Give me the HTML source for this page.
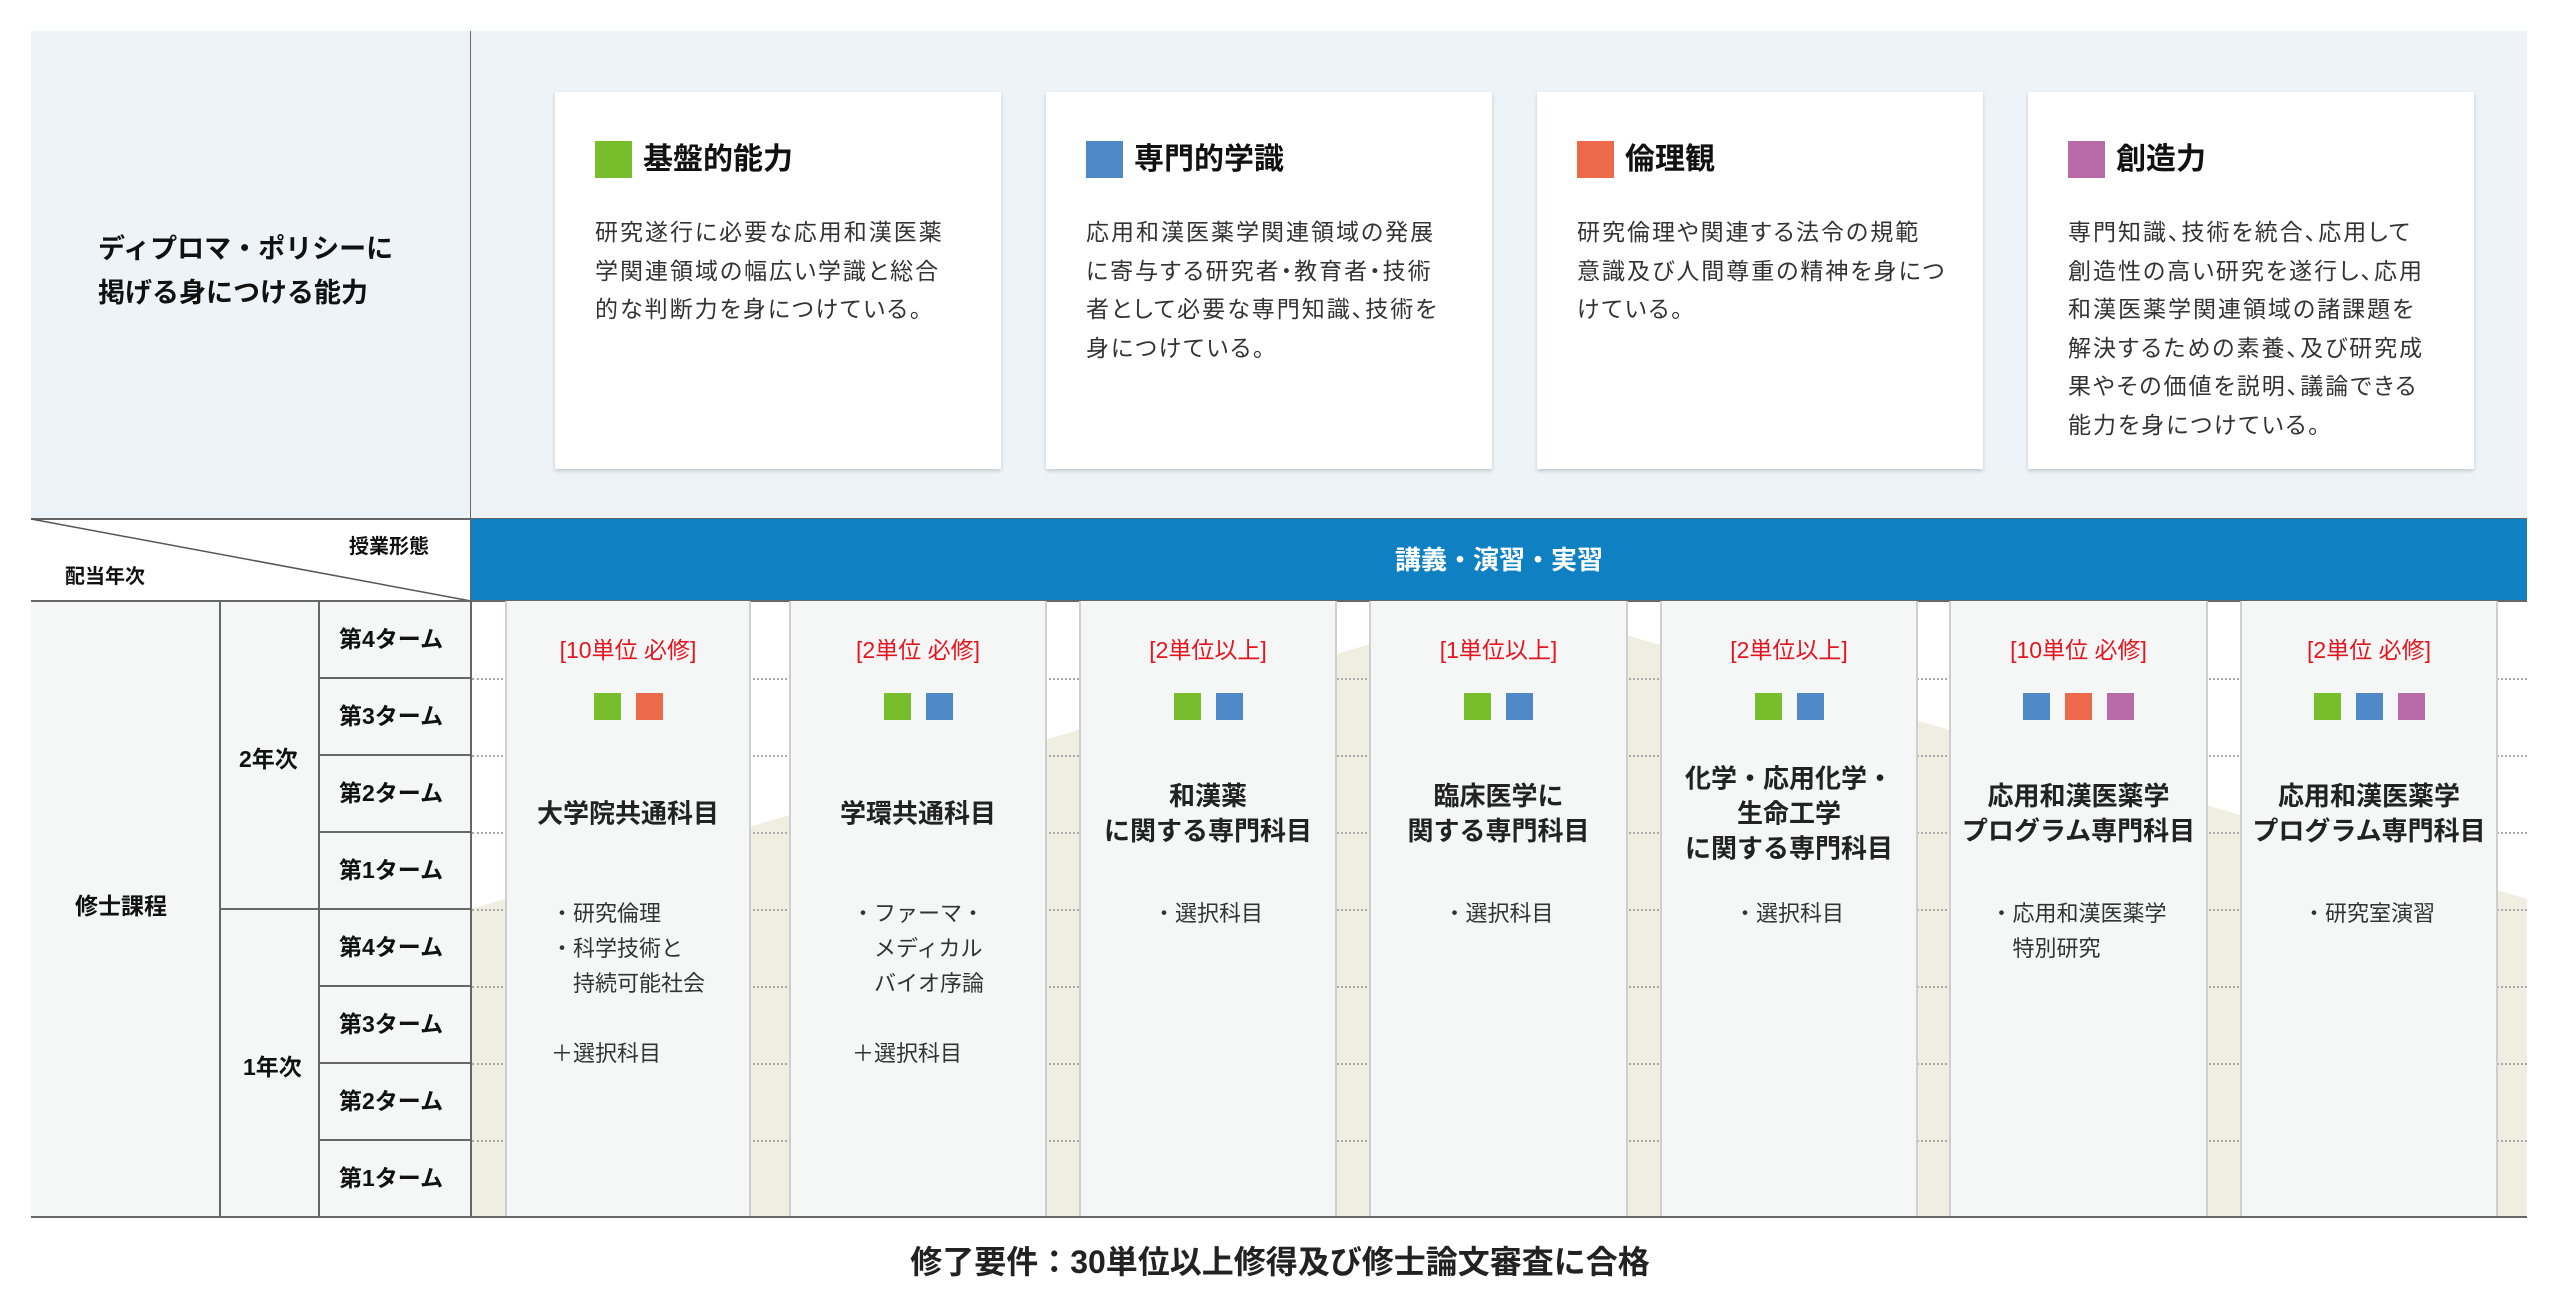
<!DOCTYPE html>
<html lang="ja"><head><meta charset="utf-8">
<style>
*{margin:0;padding:0;box-sizing:border-box}
body{width:2560px;height:1312px;background:#fff;position:relative;overflow:hidden;font-family:"Liberation Sans","Noto Sans CJK JP",sans-serif;color:#222}
.a{position:absolute}
.card{position:absolute;top:92px;width:446px;height:377px;background:#fff;box-shadow:0 2px 4px rgba(0,0,0,.18)}
.card .sq{position:absolute;left:40px;top:49px;width:37px;height:37px}
.card h3{position:absolute;left:88px;top:46px;font-size:30px;font-weight:bold;line-height:44px;color:#111}
.card p{position:absolute;left:40px;top:121px;white-space:nowrap;font-size:23px;line-height:38.5px;letter-spacing:2px;color:#333;font-feature-settings:"palt"}
.g{background:#78bd2b}.b{background:#4e88c7}.o{background:#ec6a4b}.p{background:#b96aa9}
.col{position:absolute;top:601px;height:616px;background:#f5f7f7;border-left:2px solid #cfcfcf;border-right:2px solid #cfcfcf;text-align:center}
.cr{position:absolute;left:0;right:0;top:33px;font-size:23px;line-height:32px;color:#e5151f}
.sqs{position:absolute;left:0;right:0;top:92px;height:27px;display:flex;justify-content:center;gap:15px}
.sqs span{width:27px;height:27px;display:block}
.tt{position:absolute;left:-4px;right:-4px;top:213px;transform:translateY(-50%);font-size:26px;font-weight:bold;line-height:35px;color:#222}
.bl{position:absolute;left:0;right:0;top:295px;text-align:center}
.bl div{display:inline-block;text-align:left;font-size:22px;line-height:35px;color:#333}
.term{position:absolute;left:319px;width:152px;height:77px;border-bottom:2px solid #666;font-size:23px;font-weight:bold;line-height:75px;padding-left:20px;color:#111}
.dot{position:absolute;height:0;border-top:2px dotted #aaa}
</style></head><body>
<div class="a" style="left:31px;top:31px;width:2496px;height:487px;background:#eef3f7"></div>
<div class="a" style="left:470px;top:31px;width:1px;height:570px;background:#666"></div>
<div class="a" style="left:98px;top:227px;font-size:27px;font-weight:bold;line-height:44px;color:#111">ディプロマ・ポリシーに<br>掲げる身につける能力</div>

<div class="card" style="left:555px"><div class="sq g"></div><h3>基盤的能力</h3><p>研究遂行に必要な応用和漢医薬<br>学関連領域の幅広い学識と総合<br>的な判断力を身につけている。</p></div>
<div class="card" style="left:1046px"><div class="sq b"></div><h3>専門的学識</h3><p>応用和漢医薬学関連領域の発展<br>に寄与する研究者・教育者・技術<br>者として必要な専門知識、技術を<br>身につけている。</p></div>
<div class="card" style="left:1537px"><div class="sq o"></div><h3>倫理観</h3><p>研究倫理や関連する法令の規範<br>意識及び人間尊重の精神を身につ<br>けている。</p></div>
<div class="card" style="left:2028px"><div class="sq p"></div><h3>創造力</h3><p>専門知識、技術を統合、応用して<br>創造性の高い研究を遂行し、応用<br>和漢医薬学関連領域の諸課題を<br>解決するための素養、及び研究成<br>果やその価値を説明、議論できる<br>能力を身につけている。</p></div>

<div class="a" style="left:31px;top:518px;width:2496px;height:2px;background:#666"></div>
<svg class="a" style="left:31px;top:518px" width="440" height="84"><line x1="0" y1="1" x2="440" y2="83" stroke="#555" stroke-width="1.5"/></svg>
<div class="a" style="left:349px;top:530px;font-size:20px;font-weight:bold;color:#111">授業形態</div>
<div class="a" style="left:65px;top:560px;font-size:20px;font-weight:bold;color:#111">配当年次</div>
<div class="a" style="left:471px;top:519px;width:2056px;height:82px;background:#0f80c1;color:#fff;font-size:26px;font-weight:bold;line-height:82px;text-align:center">講義・演習・実習</div>
<div class="a" style="left:31px;top:600px;width:2496px;height:2px;background:#666"></div>

<svg class="a" style="left:0;top:0" width="2560" height="1312"><polygon points="471,909 1513,602 2527,899 2527,1217 471,1217" fill="#efeee1"/></svg>

<div class="a" style="left:31px;top:602px;width:440px;height:615px;background:#f5f7f6"></div>
<div class="a" style="left:219px;top:602px;width:2px;height:615px;background:#666"></div>
<div class="a" style="left:318px;top:602px;width:2px;height:615px;background:#666"></div>
<div class="a" style="left:470px;top:602px;width:2px;height:615px;background:#666"></div>
<div class="a" style="left:219px;top:908px;width:100px;height:2px;background:#666"></div>
<div class="a" style="left:75px;top:887px;font-size:23px;font-weight:bold;color:#111">修士課程</div>
<div class="a" style="left:239px;top:740px;font-size:23px;font-weight:bold;color:#111">2年次</div>
<div class="a" style="left:243px;top:1048px;font-size:23px;font-weight:bold;color:#111">1年次</div>
<div class="term" style="top:602px">第4ターム</div>
<div class="term" style="top:679px">第3ターム</div>
<div class="term" style="top:756px">第2ターム</div>
<div class="term" style="top:833px">第1ターム</div>
<div class="term" style="top:910px">第4ターム</div>
<div class="term" style="top:987px">第3ターム</div>
<div class="term" style="top:1064px">第2ターム</div>
<div class="term" style="top:1141px;border-bottom:none">第1ターム</div>

<div class="a" style="left:472px;top:0;width:2055px;height:1312px">
<div class="dot" style="left:0;right:0;top:678px"></div>
<div class="dot" style="left:0;right:0;top:755px"></div>
<div class="dot" style="left:0;right:0;top:832px"></div>
<div class="dot" style="left:0;right:0;top:909px"></div>
<div class="dot" style="left:0;right:0;top:986px"></div>
<div class="dot" style="left:0;right:0;top:1063px"></div>
<div class="dot" style="left:0;right:0;top:1140px"></div>
</div>

<div class="col" style="left:505px;width:246px"><div class="cr">[10単位 必修]</div><div class="sqs"><span class="g"></span><span class="o"></span></div><div class="tt">大学院共通科目</div><div class="bl"><div>・研究倫理<br>・科学技術と<br>　持続可能社会<br><br>＋選択科目</div></div></div>
<div class="col" style="left:789px;width:258px"><div class="cr">[2単位 必修]</div><div class="sqs"><span class="g"></span><span class="b"></span></div><div class="tt">学環共通科目</div><div class="bl"><div>・ファーマ・<br>　メディカル<br>　バイオ序論<br><br>＋選択科目</div></div></div>
<div class="col" style="left:1079px;width:258px"><div class="cr">[2単位以上]</div><div class="sqs"><span class="g"></span><span class="b"></span></div><div class="tt">和漢薬<br>に関する専門科目</div><div class="bl"><div>・選択科目</div></div></div>
<div class="col" style="left:1369px;width:259px"><div class="cr">[1単位以上]</div><div class="sqs"><span class="g"></span><span class="b"></span></div><div class="tt">臨床医学に<br>関する専門科目</div><div class="bl"><div>・選択科目</div></div></div>
<div class="col" style="left:1660px;width:258px"><div class="cr">[2単位以上]</div><div class="sqs"><span class="g"></span><span class="b"></span></div><div class="tt">化学・応用化学・<br>生命工学<br>に関する専門科目</div><div class="bl"><div>・選択科目</div></div></div>
<div class="col" style="left:1949px;width:259px"><div class="cr">[10単位 必修]</div><div class="sqs"><span class="b"></span><span class="o"></span><span class="p"></span></div><div class="tt">応用和漢医薬学<br>プログラム専門科目</div><div class="bl"><div>・応用和漢医薬学<br>　特別研究</div></div></div>
<div class="col" style="left:2240px;width:258px"><div class="cr">[2単位 必修]</div><div class="sqs"><span class="g"></span><span class="b"></span><span class="p"></span></div><div class="tt">応用和漢医薬学<br>プログラム専門科目</div><div class="bl"><div>・研究室演習</div></div></div>

<div class="a" style="left:31px;top:1216px;width:2496px;height:2px;background:#666"></div>
<div class="a" style="left:0;width:2560px;top:1240px;text-align:center;font-size:32px;font-weight:bold;line-height:44px;color:#222">修了要件：30単位以上修得及び修士論文審査に合格</div>
</body></html>
